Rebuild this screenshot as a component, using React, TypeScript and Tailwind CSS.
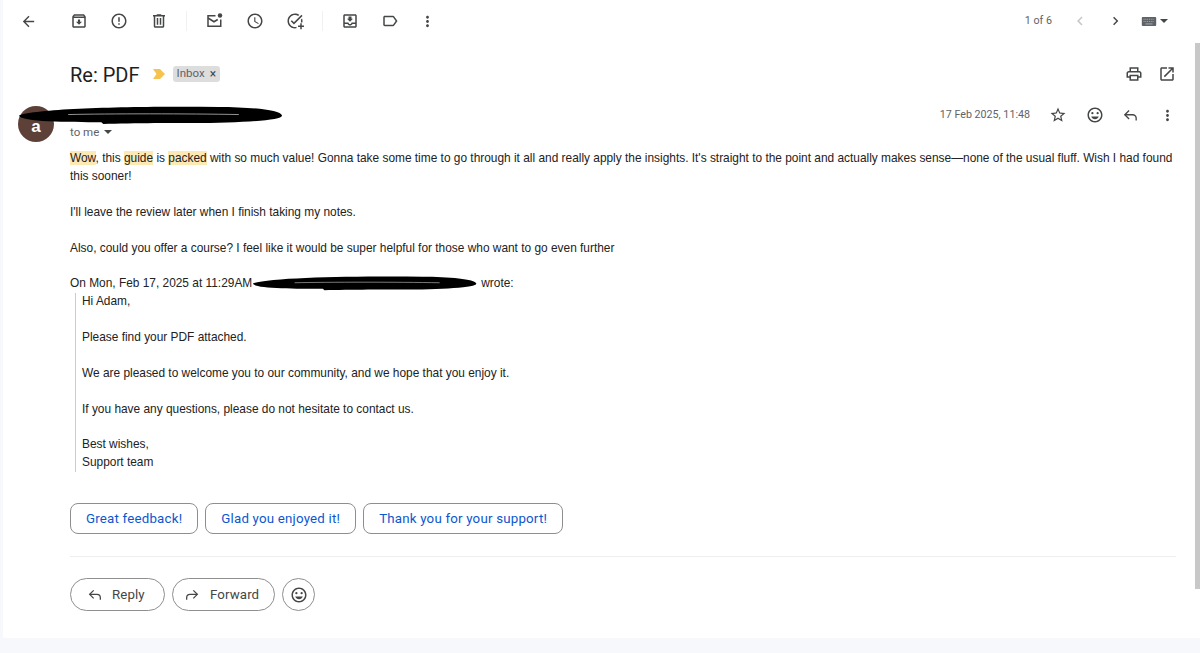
import type { ReactNode } from "react";

const P = {
  back: "M20 11H7.83l5.59-5.59L12 4l-8 8 8 8 1.41-1.41L7.83 13H20v-2z",
  archive:
    "M20.54 5.23l-1.39-1.68C18.88 3.21 18.47 3 18 3H6c-.47 0-.88.21-1.16.55L3.46 5.23C3.17 5.57 3 6.02 3 6.5V19c0 1.1.9 2 2 2h14c1.1 0 2-.9 2-2V6.5c0-.48-.17-.93-.46-1.27zM6.24 5h11.52l.83 1H5.42l.82-1zM5 19V8h14v11H5zm8.45-9h-2.9v3H8l4 4 4-4h-2.55z",
  report:
    "M11 15h2v2h-2zm0-8h2v6h-2zm.99-5C6.47 2 2 6.48 2 12s4.47 10 9.99 10C17.52 22 22 17.52 22 12S17.52 2 11.99 2zM12 20c-4.42 0-8-3.58-8-8s3.58-8 8-8 8 3.58 8 8-3.58 8-8 8z",
  trash: "M15 4V3H9v1H4v2h1v13c0 1.1.9 2 2 2h10c1.1 0 2-.9 2-2V6h1V4h-5zm2 15H7V6h10v13zM9 8h2v9H9zm4 0h2v9h-2z",
  clock:
    "M11.99 2C6.47 2 2 6.48 2 12s4.47 10 9.99 10C17.52 22 22 17.52 22 12S17.52 2 11.99 2zM12 20c-4.42 0-8-3.58-8-8s3.58-8 8-8 8 3.58 8 8-3.58 8-8 8zm.5-13H11v6l5.25 3.15.75-1.23-4.5-2.67z",
  addTask:
    "M22 5.18L10.59 16.6l-4.24-4.24 1.41-1.41 2.83 2.83 10-10L22 5.18zm-2.21 5.04c.13.57.21 1.17.21 1.78 0 .7-.09 1.38-.26 2h2.05c.14-.65.21-1.32.21-2 0-1.19-.22-2.33-.6-3.39l-1.61 1.61zM12 20c-4.42 0-8-3.58-8-8s3.58-8 8-8c1.58 0 3.04.46 4.28 1.25l1.44-1.44C16.1 2.67 14.13 2 12 2 6.48 2 2 6.48 2 12s4.48 10 10 10c.7 0 1.37-.07 2-.2v-2.05c-.64.16-1.31.25-2 .25zm7-5h-0v-0h2v3h3v2h-3v3h-2v-3h-3v-2h3v-3z",
  moveInbox:
    "M19 3H5c-1.1 0-2 .9-2 2v14c0 1.1.9 2 2 2h14c1.1 0 2-.9 2-2V5c0-1.1-.9-2-2-2zm0 16H5v-3h3.56c.69 1.19 1.97 2 3.45 2s2.75-.81 3.45-2H19v3zm0-5h-4.99c0 1.1-.9 2-2 2s-2-.9-2-2H5V5h14v9zm-3-5h-2V6h-4v3H8l4 4 4-4z",
  label:
    "M17.63 5.84C17.27 5.33 16.67 5 16 5L5 5.01C3.9 5.01 3 5.9 3 7v10c0 1.1.9 1.99 2 1.99L16 19c.67 0 1.27-.33 1.63-.84L22 12l-4.37-6.16zM16 17H5V7h11l3.55 5L16 17z",
  more: "M12 8c1.1 0 2-.9 2-2s-.9-2-2-2-2 .9-2 2 .9 2 2 2zm0 2c-1.1 0-2 .9-2 2s.9 2 2 2 2-.9 2-2-.9-2-2-2zm0 6c-1.1 0-2 .9-2 2s.9 2 2 2 2-.9 2-2-.9-2-2-2z",
  left: "M15.41 7.41L14 6l-6 6 6 6 1.41-1.41L10.83 12z",
  right: "M10 6L8.59 7.41 13.17 12l-4.58 4.59L10 18l6-6z",
  print:
    "M19 8h-1V3H6v5H5c-1.66 0-3 1.34-3 3v6h4v4h12v-4h4v-6c0-1.66-1.34-3-3-3zM8 5h8v3H8V5zm8 14H8v-4h8v4zm4-4h-2v-2H6v2H4v-4c0-.55.45-1 1-1h14c.55 0 1 .45 1 1v4z",
  open: "M19 19H5V5h7V3H5c-1.11 0-2 .9-2 2v14c0 1.1.89 2 2 2h14c1.1 0 2-.9 2-2v-7h-2v7zM14 3v2h3.59l-9.83 9.83 1.41 1.41L19 6.41V10h2V3h-7z",
  star: "M22 9.24l-7.19-.62L12 2 9.19 8.63 2 9.24l5.46 4.73L5.82 21 12 17.27 18.18 21l-1.63-7.03L22 9.24zM12 15.4l-3.76 2.27 1-4.28-3.32-2.88 4.38-.38L12 6.1l1.71 4.04 4.38.38-3.32 2.88 1 4.28L12 15.4z",
};

function Icon({ d, className = "w-[18px] h-[18px] text-[#444746]" }: { d: string; className?: string }) {
  return (
    <svg viewBox="0 0 24 24" fill="currentColor" className={className}>
      <path d={d} />
    </svg>
  );
}

function UnreadIcon() {
  return (
    <svg viewBox="0 0 24 24" fill="none" stroke="currentColor" strokeWidth="2" className="w-[18px] h-[18px] text-[#444746]">
      <path d="M14 5H4v14h17V10" />
      <path d="M4 8l8 5 5-3" />
      <circle cx="20" cy="4.5" r="3" fill="currentColor" stroke="none" />
    </svg>
  );
}

function SmileIcon({ className = "w-[18px] h-[18px] text-[#444746]" }: { className?: string }) {
  return (
    <svg viewBox="0 0 24 24" fill="currentColor" className={className}>
      <path d="M11.99 2C6.47 2 2 6.48 2 12s4.47 10 9.99 10C17.52 22 22 17.52 22 12S17.52 2 11.99 2zM12 20c-4.42 0-8-3.58-8-8s3.58-8 8-8 8 3.58 8 8-3.58 8-8 8z" />
      <circle cx="15.5" cy="9.5" r="1.5" />
      <circle cx="8.5" cy="9.5" r="1.5" />
      <path d="M12 17.5c2.33 0 4.31-1.46 5.11-3.5H6.89c.8 2.04 2.78 3.5 5.11 3.5z" />
    </svg>
  );
}

function ReplyIcon({ className = "w-[18px] h-[18px] text-[#444746]" }: { className?: string }) {
  return (
    <svg viewBox="0 0 24 24" fill="none" stroke="currentColor" strokeWidth="1.9" className={className}>
      <path d="M10 5l-6 6 6 6" />
      <path d="M4 11h11a5 5 0 0 1 5 5v3" />
    </svg>
  );
}

function ForwardIcon({ className = "w-[18px] h-[18px] text-[#444746]" }: { className?: string }) {
  return (
    <svg viewBox="0 0 24 24" fill="none" stroke="currentColor" strokeWidth="1.9" className={className}>
      <path d="M14 5l6 6-6 6" />
      <path d="M20 11H9a5 5 0 0 0-5 5v3" />
    </svg>
  );
}

function Btn({ children, className = "w-10" }: { children: ReactNode; className?: string }) {
  return <div className={`h-10 flex items-center justify-center shrink-0 ${className}`}>{children}</div>;
}

function Redaction({ className }: { className: string }) {
  return (
    <svg viewBox="0 0 265 20" preserveAspectRatio="none" className={`absolute ${className}`}>
      <path d="M1 10C20 2 120 0 200 1c30 0 62 3 63 9 1 5-40 8-90 8-10 0-60 0-88 1l-2-2C50 17 3 17 1 10z" fill="#000" />
      <path d="M50 9c40-1 120-1 170 0" stroke="#bbb" strokeWidth="0.8" fill="none" />
    </svg>
  );
}

function Mark({ children }: { children: ReactNode }) {
  return <span className="bg-[#fde9b4]">{children}</span>;
}

function Suggestion({ children }: { children: ReactNode }) {
  return (
    <div className="h-[31px] px-[15px] flex items-center rounded-lg border border-[#8e8e8e] text-[#0b57d0] text-[13.3px] tracking-[0.2px] font-[Roboto,sans-serif]">
      {children}
    </div>
  );
}

export default function App() {
  return (
    <div className="w-[1200px] h-[653px] bg-[#f6f8fc] overflow-hidden font-['Liberation_Sans',Arial,sans-serif]">
      <div className="ml-[3px] h-[638px] bg-white flex">
        <div className="flex-1 min-w-0">
          {/* Toolbar */}
          <div className="h-[42px] flex items-center text-[#444746]">
            <Btn className="w-[50px]"><Icon d={P.back} className="w-[17px] h-[17px] text-[#444746]" /></Btn>
            <Btn className="w-[6px]"><span /></Btn>
            <Btn><Icon d={P.archive} /></Btn>
            <Btn><Icon d={P.report} /></Btn>
            <Btn><Icon d={P.trash} /></Btn>
            <div className="ml-[7px] w-px h-5 bg-[#f1f1f1]" />
            <Btn className="w-[54px]"><UnreadIcon /></Btn>
            <Btn className="w-[28px]"><Icon d={P.clock} /></Btn>
            <Btn className="w-[52px]"><Icon d={P.addTask} /></Btn>
            <div className="ml-px w-px h-5 bg-[#f1f1f1]" />
            <Btn className="w-[54px]"><Icon d={P.moveInbox} /></Btn>
            <Btn className="w-[26px]"><Icon d={P.label} /></Btn>
            <Btn className="w-[48px]"><Icon d={P.more} className="w-[17px] h-[17px] text-[#444746]" /></Btn>
            <div className="flex-1" />
            <span className="text-[10.7px] text-[#5f6368] font-[Roboto,sans-serif]">1 of 6</span>
            <Btn className="w-[55px]"><Icon d={P.left} className="w-[18px] h-[18px] text-[#c4c7c5]" /></Btn>
            <Btn className="w-[17px]"><Icon d={P.right} className="w-[18px] h-[18px] text-[#444746]" /></Btn>
            <div className="ml-[17px] flex items-center gap-[3px] w-[29px]">
              <svg viewBox="0 0 16 10" className="w-4 h-[9px] shrink-0">
                <rect width="16" height="10" rx="1" fill="#5f6368" />
                <path d="M2 2.5h12M2 5h12" stroke="#aeb1b3" strokeWidth="1" strokeDasharray="1 1" />
                <path d="M4 7.7h8" stroke="#aeb1b3" strokeWidth="1" />
              </svg>
              <div className="w-0 h-0 border-x-[4px] border-x-transparent border-t-[4px] border-t-[#444746]" />
            </div>
            <div className="w-[25px]" />
          </div>

          {/* Subject */}
          <div className="h-[64px] pl-[67px] pr-[19px] flex items-center">
            <h1 className="text-[20px] text-[#1f1f1f] font-[Roboto,sans-serif] leading-none mt-px">Re: PDF</h1>
            <svg viewBox="0 0 12 10" className="ml-[13px] w-[12px] h-[10px]">
              <path d="M0 0h7l5 5-5 5H0l3.5-5z" fill="#f6c34f" />
            </svg>
            <div className="ml-[8px] h-4 px-[4px] flex items-center gap-[5px] rounded-[3px] bg-[#dddddd] text-[11.5px] text-[#5f6368] font-[Roboto,sans-serif]">
              Inbox
              <span className="text-[12px] leading-none text-[#444746]">×</span>
            </div>
            <div className="flex-1" />
            <Icon d={P.print} className="w-[18px] h-[18px] text-[#444746]" />
            <Icon d={P.open} className="ml-[15px] w-[18px] h-[18px] text-[#444746]" />
          </div>

          {/* Message */}
          <div className="relative flex">
            <Redaction className="left-[15px] top-[0px] w-[266px] h-[19px] z-10" />
            <div className="w-[67px] shrink-0 pl-[15px]">
              <div className="w-9 h-9 rounded-full bg-[#5d4037] flex items-center justify-center text-white text-[17px] font-bold pt-[6px]">
                a
              </div>
            </div>
            <div className="flex-1 min-w-0 pr-[19px]">
              <div className="h-[44px] flex items-start">
                <div className="pt-[19px] flex items-center text-[11.5px] text-[#5f6368] font-[Roboto,sans-serif] leading-[14px]">
                  to me
                  <div className="ml-[5px] w-0 h-0 border-x-[4px] border-x-transparent border-t-[4px] border-t-[#444746]" />
                </div>
                <div className="flex-1" />
                <div className="flex items-center">
                  <span className="text-[10.7px] text-[#5f6368] font-[Roboto,sans-serif] leading-[18px]">17 Feb 2025, 11:48</span>
                  <Icon d={P.star} className="ml-[19px] w-[18px] h-[18px] text-[#444746]" />
                  <SmileIcon className="ml-[19px] w-[18px] h-[18px] text-[#444746]" />
                  <ReplyIcon className="ml-[18px] w-[17px] h-[17px] text-[#444746]" />
                  <Icon d={P.more} className="ml-[20px] w-[17px] h-[17px] text-[#444746]" />
                </div>
              </div>

              <div className="relative text-[11.9px] leading-[17.9px] text-[#222222]">
                <p>
                  <Mark>Wow</Mark>, this <Mark>guide</Mark> is <Mark>packed</Mark> with so much value! Gonna take some time to go through it all and really apply the insights. It's straight to the point and actually makes sense—none of the usual fluff. Wish I had found this sooner!
                </p>
                <p className="mt-[17.9px]">I'll leave the review later when I finish taking my notes.</p>
                <p className="mt-[17.9px]">Also, could you offer a course? I feel like it would be super helpful for those who want to go even further</p>
                <p className="mt-[17.9px] relative">
                  On Mon, Feb 17, 2025 at 11:29AM
                  <span className="inline-block w-[229px]" />
                  wrote:
                  <Redaction className="left-[182px] top-[1px] w-[226px] h-[15px]" />
                </p>
                <blockquote className="ml-[5px] pl-[6px] border-l border-[#cccccc]">
                  <p>Hi Adam,</p>
                  <p className="mt-[17.9px]">Please find your PDF attached.</p>
                  <p className="mt-[17.9px]">We are pleased to welcome you to our community, and we hope that you enjoy it.</p>
                  <p className="mt-[17.9px]">If you have any questions, please do not hesitate to contact us.</p>
                  <p className="mt-[17.9px]">Best wishes,</p>
                  <p>Support team</p>
                </blockquote>
              </div>

              {/* Smart replies */}
              <div className="mt-[31px] flex gap-[7px]">
                <Suggestion>Great feedback!</Suggestion>
                <Suggestion>Glad you enjoyed it!</Suggestion>
                <Suggestion>Thank you for your support!</Suggestion>
              </div>

              <div className="mt-[22px] h-px bg-[#eeeeee]" />

              <div className="mt-[21px] flex gap-[7px] text-[13.3px] tracking-[0.1px] text-[#444746] font-[Roboto,sans-serif]">
                <div className="h-[33px] w-[95px] rounded-full border border-[#8e8e8e] flex items-center pl-[16px] gap-[9px]">
                  <ReplyIcon className="w-[16px] h-[16px] text-[#444746]" />
                  Reply
                </div>
                <div className="h-[33px] w-[103px] rounded-full border border-[#8e8e8e] flex items-center pl-[11px] gap-[10px]">
                  <ForwardIcon className="w-[16px] h-[16px] text-[#444746]" />
                  Forward
                </div>
                <div className="h-[33px] w-[33px] rounded-full border border-[#8e8e8e] flex items-center justify-center">
                  <SmileIcon className="w-[18px] h-[18px] text-[#444746]" />
                </div>
              </div>
            </div>
          </div>
        </div>
        <div className="w-[5px] h-[546px] mt-[43px] bg-[#c8c8c8] shrink-0" />
      </div>
    </div>
  );
}
